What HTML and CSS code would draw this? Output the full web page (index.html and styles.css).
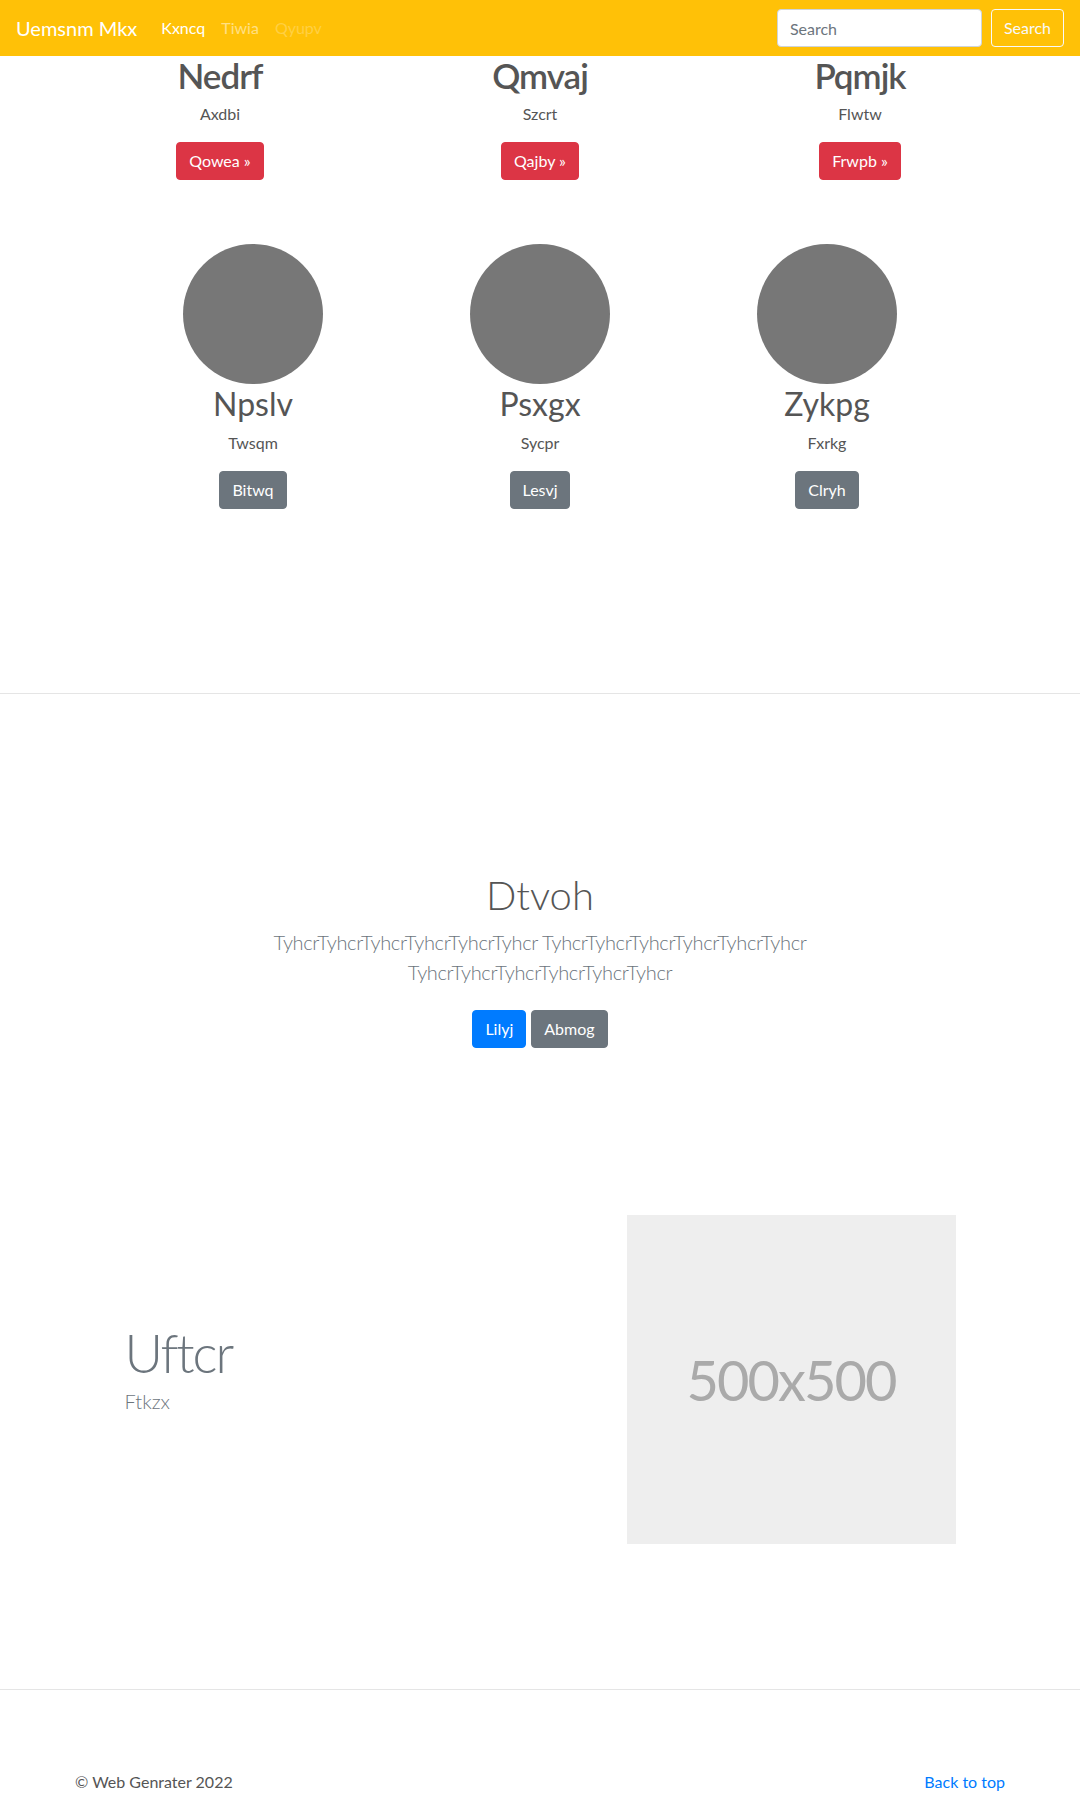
FILE: index.html
```html
<!DOCTYPE html>
<html lang="en">
<head>
<meta charset="utf-8">
<title>Uemsnm Mkx</title>
<link rel="stylesheet" href="styles.css">
</head>
<body>
<header class="navbar">
  <a class="brand" href="#">Uemsnm Mkx</a>
  <nav class="nav">
    <a class="nav-link active" href="#">Kxncq</a>
    <a class="nav-link" href="#">Tiwia</a>
    <a class="nav-link disabled" href="#">Qyupv</a>
  </nav>
  <form class="search">
    <input class="search-input" type="text" placeholder="Search" aria-label="Search">
    <button class="btn btn-outline-light" type="button">Search</button>
  </form>
</header>

<main>
  <section class="features">
    <div class="feature">
      <h2 class="feature-title">Nedrf</h2>
      <p class="feature-text">Axdbi</p>
      <a class="btn btn-danger" href="#">Qowea &raquo;</a>
    </div>
    <div class="feature">
      <h2 class="feature-title">Qmvaj</h2>
      <p class="feature-text">Szcrt</p>
      <a class="btn btn-danger" href="#">Qajby &raquo;</a>
    </div>
    <div class="feature">
      <h2 class="feature-title">Pqmjk</h2>
      <p class="feature-text">Flwtw</p>
      <a class="btn btn-danger" href="#">Frwpb &raquo;</a>
    </div>
  </section>

  <section class="marketing">
    <div class="member">
      <svg class="avatar" width="140" height="140" viewBox="0 0 140 140" aria-hidden="true"><circle cx="70" cy="70" r="70" fill="#777"/></svg>
      <h2 class="member-name">Npslv</h2>
      <p class="member-text">Twsqm</p>
      <a class="btn btn-secondary" href="#">Bitwq</a>
    </div>
    <div class="member">
      <svg class="avatar" width="140" height="140" viewBox="0 0 140 140" aria-hidden="true"><circle cx="70" cy="70" r="70" fill="#777"/></svg>
      <h2 class="member-name">Psxgx</h2>
      <p class="member-text">Sycpr</p>
      <a class="btn btn-secondary" href="#">Lesvj</a>
    </div>
    <div class="member">
      <svg class="avatar" width="140" height="140" viewBox="0 0 140 140" aria-hidden="true"><circle cx="70" cy="70" r="70" fill="#777"/></svg>
      <h2 class="member-name">Zykpg</h2>
      <p class="member-text">Fxrkg</p>
      <a class="btn btn-secondary" href="#">Clryh</a>
    </div>
  </section>

  <hr class="divider divider-first">

  <section class="jumbotron">
    <h1 class="jumbotron-title">Dtvoh</h1>
    <p class="lead jumbotron-lead">TyhcrTyhcrTyhcrTyhcrTyhcrTyhcr TyhcrTyhcrTyhcrTyhcrTyhcrTyhcr TyhcrTyhcrTyhcrTyhcrTyhcrTyhcr</p>
    <div class="jumbotron-actions">
      <a class="btn btn-primary" href="#">Lilyj</a>
      <a class="btn btn-secondary" href="#">Abmog</a>
    </div>
  </section>

  <section class="featurette">
    <div class="featurette-text">
      <h2 class="featurette-heading">Uftcr</h2>
      <p class="lead featurette-lead">Ftkzx</p>
    </div>
    <div class="placeholder"><span class="placeholder-label">500x500</span></div>
  </section>

  <hr class="divider divider-second">
</main>

<footer class="footer">
  <p class="footer-copy">&copy; Web Genrater 2022</p>
  <p class="footer-top"><a href="#">Back to top</a></p>
</footer>
</body>
</html>
```

FILE: styles.css
```css
html, body {
  margin: 0;
  padding: 0;
}

body {
  font-family: "Segoe UI", Lato, "Open Sans", sans-serif;
  font-size: 16px;
  line-height: 1.5;
  color: #212529;
  background: #fff;
}

p {
  margin: 0 0 16px;
}

/* Navbar */
.navbar {
  display: flex;
  align-items: center;
  height: 56px;
  box-sizing: border-box;
  padding: 0 16px;
  background: #ffc107;
}

.brand {
  margin: 0 16px 0 0;
  font-size: 20px;
  line-height: 30px;
  color: #fff;
  text-decoration: none;
}

.nav {
  display: flex;
  flex: 1;
}

.nav-link {
  padding: 8px;
  color: rgba(255, 255, 255, 0.5);
  text-decoration: none;
}

.nav-link.active {
  color: #fff;
}

.nav-link.disabled {
  color: rgba(255, 255, 255, 0.25);
}

.search {
  display: flex;
  gap: 9px;
  margin: 0;
}

.search-input {
  width: 205px;
  height: 38px;
  box-sizing: border-box;
  padding: 6px 12px;
  border: 1px solid #ced4da;
  border-radius: 4px;
  font: inherit;
  color: #495057;
  background: #fff;
}

.search-input::placeholder {
  color: #6c757d;
}

/* Buttons */
.btn {
  display: inline-block;
  box-sizing: border-box;
  padding: 6px 12px;
  font-family: inherit;
  font-size: 16px;
  line-height: 24px;
  border: 1px solid transparent;
  border-radius: 4px;
  text-decoration: none;
  color: #fff;
  cursor: pointer;
}

.btn-outline-light {
  height: 38px;
  border-color: #f8f9fa;
  color: #f8f9fa;
  background: transparent;
}

.btn-danger {
  background: #dc3545;
  border-color: #dc3545;
}

.btn-secondary {
  background: #6c757d;
  border-color: #6c757d;
}

.btn-primary {
  background: #007bff;
  border-color: #007bff;
}

/* Top features */
.features {
  width: 960px;
  margin: 0 auto;
  display: grid;
  grid-template-columns: repeat(3, 1fr);
}

.feature,
.member {
  display: flex;
  flex-direction: column;
  align-items: center;
  text-align: center;
}

.feature-title {
  margin: 0 0 8px;
  font-size: 35px;
  font-weight: 600;
  line-height: 38px;
  letter-spacing: -1px;
  color: #555;
}

.feature-text {
  margin-bottom: 16px;
  color: #555;
}

.member-text {
  color: #555;
}

/* Marketing circles */
.marketing {
  width: 861px;
  margin: 64px auto 0;
  display: grid;
  grid-template-columns: repeat(3, 1fr);
}

.avatar {
  display: block;
  margin-bottom: 1px;
}

.member-name {
  margin: 0 0 8px;
  font-size: 32px;
  font-weight: 400;
  line-height: 1.2;
  color: #555;
}

/* Dividers */
.divider {
  margin: 0;
  border: 0;
  border-top: 1px solid #e5e5e5;
}

.divider-first {
  margin-top: 184px;
}

.divider-second {
  margin-top: 145px;
}

/* Jumbotron */
.jumbotron {
  padding-top: 177px;
  text-align: center;
}

.jumbotron-title {
  margin: 0 0 8px;
  font-size: 40px;
  font-weight: 300;
  line-height: 1.2;
  color: #555;
}

.lead {
  font-size: 20px;
  font-weight: 300;
  line-height: 1.5;
  color: #6c757d;
}

.jumbotron-lead {
  max-width: 600px;
  margin: 0 auto 23px;
  letter-spacing: -0.35px;
}

.jumbotron-actions {
  display: flex;
  justify-content: center;
  gap: 5px;
}

/* Featurette */
.featurette {
  width: 831px;
  margin: 167px auto 0;
  display: grid;
  grid-template-columns: 1fr 329px;
  column-gap: 30px;
  align-items: center;
}

.featurette-heading {
  margin: 0 0 7px;
  font-size: 53px;
  font-weight: 300;
  line-height: 1;
  letter-spacing: -2px;
  color: #6c757d;
}

.featurette-lead {
  margin: 0 0 17px;
}

.placeholder {
  width: 329px;
  height: 329px;
  display: flex;
  align-items: center;
  justify-content: center;
  background: #eee;
}

.placeholder-label {
  font-size: 56px;
  line-height: 1;
  letter-spacing: -2px;
  color: #aaa;
}

/* Footer */
.footer {
  width: 930px;
  margin: 0 auto;
  padding-top: 80px;
  display: flex;
  justify-content: space-between;
}

.footer-copy {
  color: #555;
}

.footer-top a {
  color: #007bff;
  text-decoration: none;
}
```
